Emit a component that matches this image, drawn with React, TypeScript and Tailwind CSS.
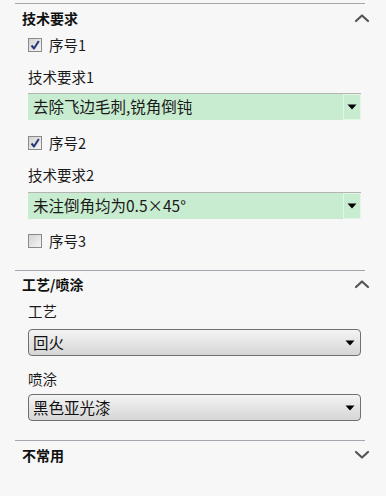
import React from "react";

const font = { fontFamily: '"Noto Sans CJK SC", "Noto Sans", sans-serif' };

function Chevron({ up }: { up: boolean }) {
  return (
    <svg width="16" height="10" viewBox="0 0 16 10" className="block">
      <path
        d={up ? "M2 8 L8 2.5 L14 8" : "M2 2 L8 7.5 L14 2"}
        fill="none"
        stroke="#555"
        strokeWidth="2.2"
        strokeLinecap="round"
        strokeLinejoin="round"
      />
    </svg>
  );
}

function Divider({ top }: { top: string }) {
  return <div className={`ml-[15px] mr-[21px] h-px bg-[#a6a6ae] ${top}`} />;
}

function Header({ title, up, h }: { title: string; up: boolean; h: string }) {
  return (
    <div className={`flex ${h} items-center justify-between pl-[22px] pr-[16px]`}>
      <span className="text-[14px] font-bold text-[#111]">{title}</span>
      <Chevron up={up} />
    </div>
  );
}

function Check({ checked, label, top }: { checked: boolean; label: string; top: string }) {
  return (
    <div className={`flex h-[26px] items-center pl-[28px] ${top}`}>
      <div className="flex h-[14px] w-[14px] items-center justify-center border border-[#8a8a8a] bg-gradient-to-br from-[#d4d4d4] to-[#f4f4f4]">
        {checked && (
          <svg width="10" height="10" viewBox="0 0 10 10">
            <path d="M1.5 5.5 L4 8.5 L8.8 1" fill="none" stroke="#243a78" strokeWidth="2" strokeLinejoin="round" />
          </svg>
        )}
      </div>
      <span className="ml-[7px] text-[14.5px] leading-none text-[#1a1a1a]">{label}</span>
    </div>
  );
}

function Label({ text, top }: { text: string; top: string }) {
  return (
    <div className={`h-[22px] pl-[28px] text-[14.5px] leading-[22px] text-[#1a1a1a] ${top}`}>{text}</div>
  );
}

function Arrow() {
  return (
    <svg width="10" height="6" viewBox="0 0 10 6">
      <path d="M0.5 0.5 L9.5 0.5 L5 5.5 Z" fill="#000" />
    </svg>
  );
}

function GreenSelect({ text, top }: { text: string; top: string }) {
  return (
    <div className={`ml-[28px] mr-[25px] flex h-[27px] items-stretch border-t border-[#b4b4b4] bg-[#c8ecd0] ${top}`}>
      <span className="flex flex-1 items-center pl-[5px] text-[15.5px] text-[#1a1a1a]">{text}</span>
      <div className="flex w-[18px] items-center justify-center border border-[#e2f5e6]">
        <Arrow />
      </div>
    </div>
  );
}

function GraySelect({ text, top }: { text: string; top: string }) {
  return (
    <div className={`ml-[28px] mr-[25px] flex h-[27px] items-center rounded-[4px] border border-[#707070] bg-gradient-to-b from-[#f4f4f4] to-[#d6d6d6] ${top}`}>
      <span className="flex-1 pl-[4px] text-[15.5px] text-[#111]">{text}</span>
      <div className="mr-[5px] flex items-center">
        <Arrow />
      </div>
    </div>
  );
}

export default function App() {
  return (
    <div className="h-[496px] w-[386px] overflow-hidden bg-[#f7f7f7] pt-[3px]" style={font}>
      <Divider top="" />
      <Header title="技术要求" up h="h-[28px]" />
      <Check checked label="序号1" top="" />
      <Label text="技术要求1" top="mt-[8px]" />
      <GreenSelect text="去除飞边毛刺,锐角倒钝" top="mt-[5px]" />
      <Check checked label="序号2" top="mt-[10px]" />
      <Label text="技术要求2" top="mt-[8px]" />
      <GreenSelect text="未注倒角均为0.5×45°" top="mt-[6px]" />
      <Check checked={false} label="序号3" top="mt-[9px]" />
      <Divider top="mt-[16px]" />
      <Header title="工艺/喷涂" up h="h-[26px]" />
      <Label text="工艺" top="mt-[3px]" />
      <GraySelect text="回火" top="mt-[7px]" />
      <Label text="喷涂" top="mt-[12px]" />
      <GraySelect text="黑色亚光漆" top="mt-[4px]" />
      <Divider top="mt-[19px]" />
      <Header title="不常用" up={false} h="h-[28px]" />
    </div>
  );
}
